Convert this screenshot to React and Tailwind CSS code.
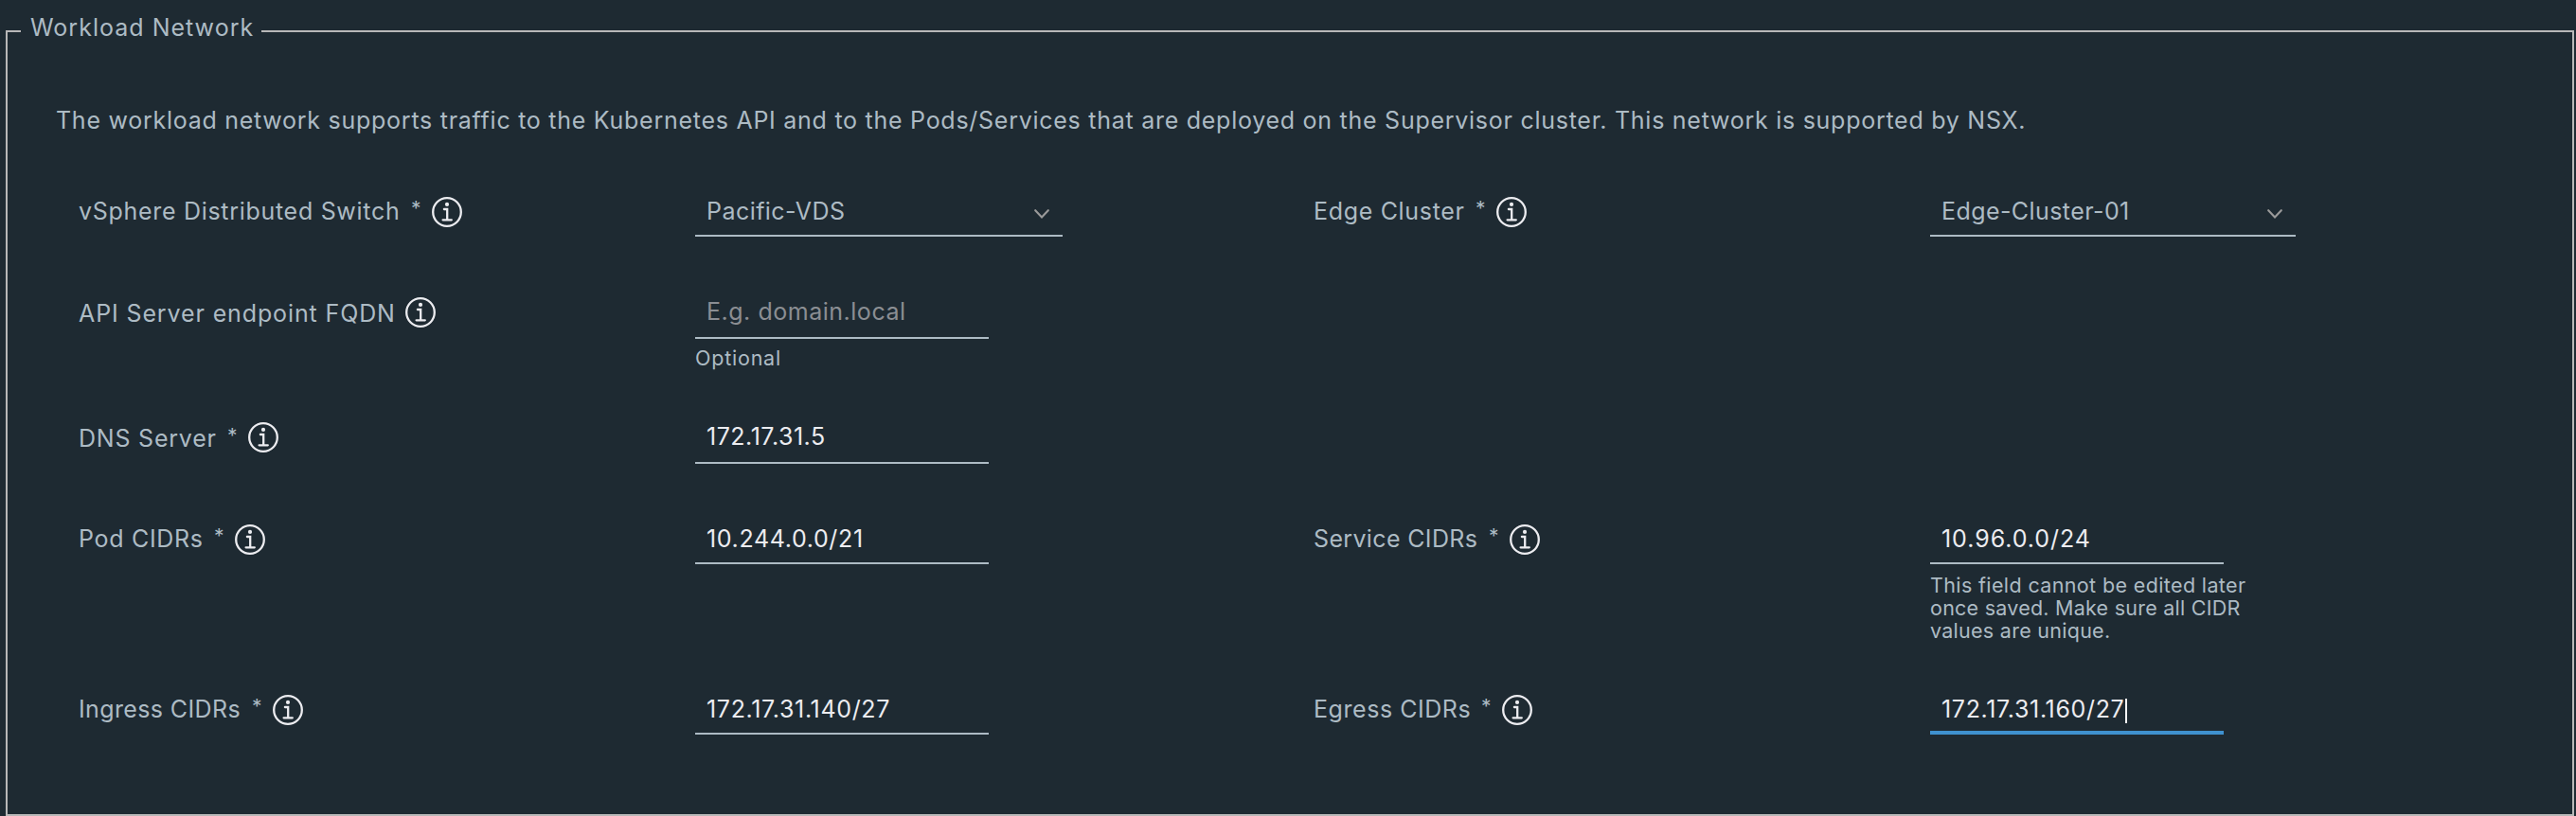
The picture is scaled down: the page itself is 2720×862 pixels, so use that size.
function InfoIcon() {
  return (
    <svg viewBox="0 0 32 32" className="h-8 w-8 shrink-0" fill="none" stroke="#ececf0" strokeWidth="2.3">
      <circle cx="16" cy="16" r="14.8" />
      <circle cx="16" cy="7.9" r="2.1" fill="#ececf0" stroke="none" />
      <path d="M12.9 13H16.2V24.2M11.6 24.3H20.8" strokeLinecap="round" />
    </svg>
  );
}

function Label({ text, width, tracking, required = true, iconTop = "mt-3" }) {
  return (
    <div className="flex w-[652px] items-start whitespace-nowrap text-[#adbbc4]">
      <span className={`${width} ${tracking} shrink-0 pl-px pt-[11px]`}>{text}</span>
      {required && <span className="-ml-px w-[22px] shrink-0 pt-[9px] text-[21px]">*</span>}
      <span className={`${iconTop} shrink-0`}>
        <InfoIcon />
      </span>
    </div>
  );
}

function Select({ value, width, tracking }) {
  return (
    <div className="w-[652px]">
      <div className={`${width} flex h-[54px] items-start justify-between border-b-2 border-[#adbbc4] pl-3 pr-3.5 text-[#adbbc4]`}>
        <span className={`${tracking} pt-[11px]`}>{value}</span>
        <svg viewBox="0 0 16 10" className="mt-[25px] h-2.5 w-4" fill="none" stroke="#9a9a9a" strokeWidth="2.1" strokeLinecap="round">
          <path d="M1.2 1.2L8 8.4L14.8 1.2" />
        </svg>
      </div>
    </div>
  );
}

function Field({ value, tracking, top = "pt-[11px]", color = "text-[#ececf0]", focused, children }) {
  return (
    <div className="w-[652px]">
      <div
        className={`${top} ${color} ${focused ? "border-b-4 border-[#3f91cf]" : "border-b-2 border-[#adbbc4]"} flex h-[54px] w-[310px] items-start whitespace-nowrap pl-3`}
      >
        <span className={`${tracking} ${focused ? "w-[194px]" : ""}`}>{value}</span>
        {focused && <span className="mt-[5px] h-[26px] w-0.5 bg-[#f4f4f6]" />}
      </div>
      {children}
    </div>
  );
}

export default function App() {
  return (
    <div className="flex h-[862px] w-[2720px] overflow-hidden bg-[#1e2a32] font-['Inter',sans-serif] text-[25px] leading-8">
      <fieldset className="ml-1.5 mt-[13px] h-[849px] w-[2712px] border-2 border-[#b8b8b8] pl-3.5">
        <legend className="w-[254px] whitespace-nowrap pb-2 pl-2.5 tracking-[1.01px] text-[#adbbc4]">Workload Network</legend>
        <p className="ml-[37px] mt-[58px] whitespace-nowrap tracking-[0.735px] text-[#adbbc4]">
          The workload network supports traffic to the Kubernetes API and to the Pods/Services that are deployed on the Supervisor
          cluster. This network is supported by NSX.
        </p>
        <div className="ml-[60px] mt-[53px] flex flex-col">
          <div className="flex h-[108px]">
            <Label text="vSphere Distributed Switch" width="w-[353px]" tracking="tracking-[0.7px]" />
            <Select value="Pacific-VDS" width="w-[388px]" tracking="tracking-[0.45px]" />
            <Label text="Edge Cluster" width="w-[173px]" tracking="tracking-[0.68px]" />
            <Select value="Edge-Cluster-01" width="w-[386px]" tracking="tracking-[0.42px]" />
          </div>
          <div className="flex h-[132px]">
            <Label text="API Server endpoint FQDN" width="w-[346px]" tracking="tracking-[0.88px]" required={false} iconTop="mt-2.5" />
            <Field value="E.g. domain.local" top="pt-[9px]" tracking="tracking-[0.52px]" color="text-[#8b8e93]">
              <p className="mt-2 text-[21.5px] leading-6 tracking-[0.78px] text-[#adbbc4]">Optional</p>
            </Field>
          </div>
          <div className="flex h-[106px]">
            <Label text="DNS Server" width="w-[159px]" tracking="tracking-[0.78px]" iconTop="mt-2.5" />
            <Field value="172.17.31.5" top="pt-[9px]" tracking="tracking-[0.52px]" />
          </div>
          <div className="flex h-[180px]">
            <Label text="Pod CIDRs" width="w-[145px]" tracking="tracking-[0.7px]" />
            <Field value="10.244.0.0/21" tracking="tracking-[0.65px]" />
            <Label text="Service CIDRs" width="w-[187px]" tracking="tracking-[0.35px]" />
            <Field value="10.96.0.0/24" tracking="tracking-[0.95px]">
              <p className="mt-[10px] whitespace-nowrap text-[21.5px] leading-6 text-[#adbbc4]">
                <span className="block tracking-[0.37px]">This field cannot be edited later</span>
                <span className="block tracking-[0.24px]">once saved. Make sure all CIDR</span>
                <span className="block tracking-[0.27px]">values are unique.</span>
              </p>
            </Field>
          </div>
          <div className="flex h-[54px]">
            <Label text="Ingress CIDRs" width="w-[185px]" tracking="tracking-[0.38px]" />
            <Field value="172.17.31.140/27" tracking="tracking-[0.66px]" />
            <Label text="Egress CIDRs" width="w-[179px]" tracking="tracking-[0.55px]" />
            <Field value="172.17.31.160/27" tracking="tracking-[0.66px]" focused />
          </div>
        </div>
      </fieldset>
    </div>
  );
}
